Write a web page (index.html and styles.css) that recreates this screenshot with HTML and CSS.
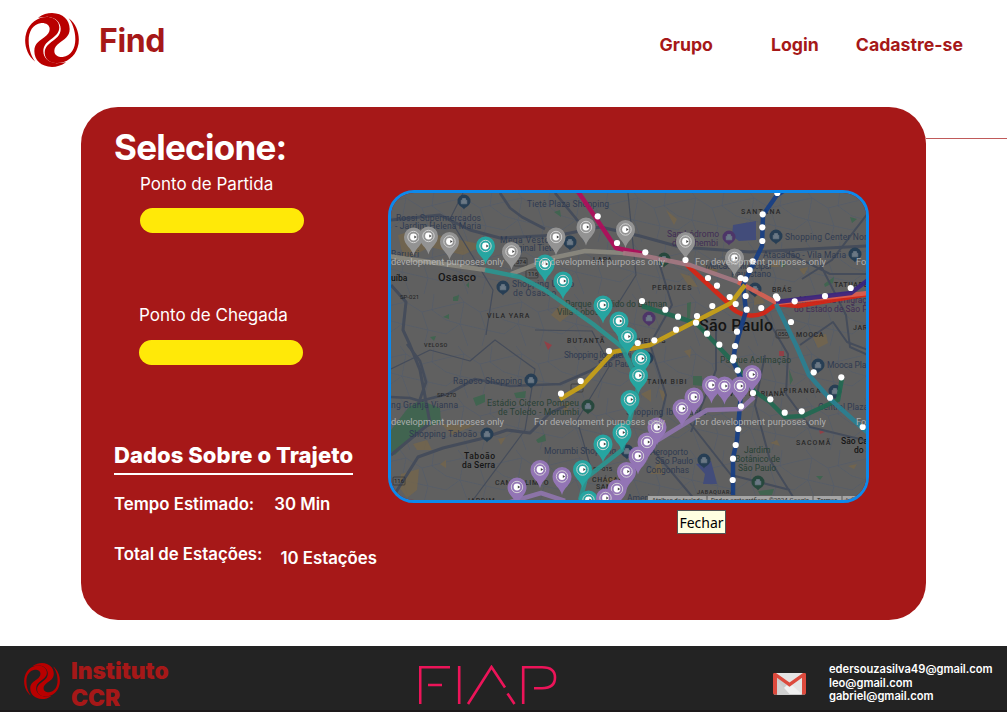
FILE: index.html
```html
<!DOCTYPE html>
<html lang="pt-BR">
<head>
<meta charset="utf-8">
<title>Find</title>
<link rel="stylesheet" href="styles.css">
</head>
<body>
<svg class="defs" width="0" height="0" aria-hidden="true">
  <defs>
    <path id="swirl" d="M108 185C80 165 72 125 81 98C90 66 120 48 148 51C168 53 180 66 180 82C180 100 166 110 155 118C138 130 132 140 132 154C132 174 148 188 172 190L200 187C186 197 172 201 158 201C125 200 105 180 105 153C105 130 122 122 135 112C146 103 151 97 151 87C151 74 138 68 126 69C100 72 88 95 88 122C88 150 98 172 108 185Z"/>
    <g id="logo"><use href="#swirl"/><use href="#swirl" transform="rotate(180 158 120)"/></g>
    <g id="pin">
      <path d="M0 18.500C-1.500 11-9.500 8.500-9.500 0A9.500 9.500 0 0 1 9.500 0C9.500 8.500 1.500 11 0 18.500Z"/>
      <circle r="5.700" fill="none" stroke="#d8d8d8" stroke-width=".9"/>
      <circle r="3.400" fill="#fff"/>
      <path d="M.8-1.500L3.200 0L.8 1.500Z" fill="#444"/>
    </g>
    <circle id="s" r="3.100"/>
    <g id="poi"><path d="M0 8.500C-1 6-6.500 5-6.500 0A6.500 6.500 0 0 1 6.500 0C6.500 5 1 6 0 8.500Z"/><path d="M-2.800-.8H2.800V2.800H-2.800ZM-1.500-.8V-2.500H1.500V-.8" fill="#6b7885" stroke="#6b7885" stroke-width=".7"/></g>
    <pattern id="streets" x="388" y="190" width="58" height="52" patternUnits="userSpaceOnUse">
      <path d="M0 12L18 8L34 18L58 12M12 0L18 8L14 30L22 52M34 18L40 36L58 40M0 40L14 30L40 36L36 52M46 0L44 16L58 26M0 26L14 30" fill="none" stroke="#535c68" stroke-width=".7"/>
    </pattern>
  </defs>
</svg>

<header class="header">
  <a class="brand"><svg class="brand-logo" viewBox="77 39 162 162"><use href="#logo"/></svg><span>Find</span></a>
  <nav class="nav"><a class="nav-group">Grupo</a><a class="nav-login">Login</a><a>Cadastre-se</a></nav>
</header>

<main class="main">
  <section class="card">
    <div class="panel">
      <h1 class="title">Selecione:</h1>
      <div class="field"><label>Ponto de Partida</label><div class="input"></div></div>
      <div class="field field-end"><label>Ponto de Chegada</label><div class="input"></div></div>
      <h2 class="subtitle">Dados Sobre o Trajeto</h2>
      <div class="data"><span class="data-name">Tempo Estimado:</span><span>30 Min</span></div>
      <div class="data data-total"><span class="data-name">Total de Estações:</span><span class="total-value">10 Estações</span></div>
    </div>
    <div class="map-column">
      <div class="map">
        <svg viewBox="391 193 475 307" preserveAspectRatio="none">
          <rect x="388" y="190" width="482" height="314" fill="#606060"/>
          <rect x="388" y="190" width="482" height="314" fill="url(#streets)"/>
          <g fill="#416450">
            <path d="M391 430L408 408L420 400L440 408L441 422L420 430L395 455L391 452Z"/>
            <path d="M473 398L485 394V402L476 406ZM514 393L526 391L525 398H516ZM536 440L545 434L546 441L538 443ZM453 297L459 295L458 301H453ZM466 285L469 282V288ZM443 317L449 314V319ZM430 337L436 336L434 341ZM693 376H702V386L693 385ZM824 284L834 277L833 283L825 287ZM789 369L793 380L790 385ZM687 303L691 302L690 318H687ZM554 212L560 210L561 217ZM758 491L774 489L772 495H760ZM850 217L857 219L852 223ZM780 262L786 264L783 268ZM816 476L823 476L820 480Z"/>
          </g>
          <g fill="#766649" opacity=".75">
            <path d="M398 235L415 230L460 240L485 245L463 255L430 247L404 260ZM413 444L427 440L432 450H417ZM401 474L419 469L417 490L407 498L399 487ZM441 424L475 425L452 435ZM551 315L565 300L574 311L560 322ZM666 210L677 219L674 225ZM680 273L690 276L698 287L689 286ZM700 262L718 270L714 276ZM755 287L765 303L754 305ZM812 336L826 334L828 343L818 348ZM641 394L651 389V402ZM659 389L667 393L663 402ZM770 267L777 260L779 267ZM602 479L617 477L612 486ZM848 466L857 464L854 469ZM560 405L571 402L566 413ZM650 474L660 460L664 474ZM799 269L808 267L804 275ZM684 351L691 349L690 358ZM498 439L506 437L501 445ZM440 464L446 460V468ZM770 443L777 440L780 446Z"/>
          </g>
          <path d="M733 225L756 221V240L739 241L732 236ZM696 464L711 461L717 484H703L705 474Z" fill="#424c7a"/>
          <path d="M544 341L552 345L548 350ZM779 351H784V356H779ZM819 430L825 432L820 434Z" fill="#914047"/>
          <g fill="none" stroke="#454c5a" stroke-linejoin="round">
            <path d="M391 220L440 215L470 230L500 238L560 235L600 227L640 236L680 247L750 252L868 246" stroke-width="3"/>
            <path d="M391 455L430 423L420 370L410 345L403 330L406 302L391 285" stroke-width="3"/>
            <path d="M391 500L418 457L443 448L480 439L507 430L530 433L550 413L565 406" stroke-width="3"/>
            <path d="M407 344L420 361L426 382L418 405M391 397L410 398L420 401L448 394L475 379L510 386L560 384L590 371L630 349M500 193L510 208L522 217L545 229M555 193L578 221" stroke-width="2.700"/>
            <path d="M868 213L832 260L802 279M782 250L830 274L868 274M800 345L833 322L847 342L868 350M818 260L846 315L850 347L868 355M762 310L788 354L786 394L810 427L868 441M765 355L755 405L770 460L795 500M657 256L672 305L650 344L666 395L653 450L695 500M690 423L731 475L790 490M716 325L716 370L691 432" stroke-width="2"/>
            <path d="M391 369L430 350L470 361L495 340L535 369L525 430L473 500M535 330L592 331L610 365L577 420L592 472M463 193L450 219L493 290L486 335M628 193L636 275L616 307" stroke-width="1.200"/>
          </g>
          <g fill="#273e54"><use href="#poi" x="464" y="201"/><use href="#poi" x="503" y="287"/><use href="#poi" x="531" y="380"/><use href="#poi" x="487" y="434"/><use href="#poi" x="570" y="242"/><use href="#poi" x="776" y="236"/><use href="#poi" x="855" y="254"/><use href="#poi" x="818" y="365"/><use href="#poi" x="835" y="391"/><use href="#poi" x="704" y="460"/><use href="#poi" x="627" y="451"/><use href="#poi" x="647" y="358"/><use href="#poi" x="755" y="289"/></g>
          <g fill="#27483d"><use href="#poi" x="588" y="406"/><use href="#poi" x="664" y="259"/><use href="#poi" x="758" y="482"/></g>
          <g fill="#4d3568"><use href="#poi" x="729" y="237"/><use href="#poi" x="649" y="318"/></g>
          <g class="places">
            <text x="396" y="221" textLength="85">Rossi Supermercados</text><text x="395" y="229" textLength="86">- Jardim Helena Maria</text>
            <text x="391" y="257" textLength="28">Barueri</text><text x="527" y="207" textLength="82">Tietê Plaza Shopping</text>
            <text x="500" y="243" textLength="64">Mega Vestcasa</text><text x="507" y="251" textLength="49">Original Tietê</text>
            <text x="512" y="287" textLength="62">Shopping União</text><text x="513" y="296" textLength="43">de Osasco</text>
            <text x="453" y="384" textLength="69">Raposo Shopping</text><text x="391" y="408" textLength="67">ng Granja Vianna</text>
            <text x="409" y="437" textLength="68">Shopping Taboão</text><text x="544" y="454" textLength="72">Morumbi Shopping</text>
            <text x="564" y="358" textLength="67">Shopping Iguatemi</text><text x="598" y="367">São Paulo</text><text x="626" y="415" textLength="80">Shopping Ibirapuera</text>
            <text x="785" y="240" textLength="82">Shopping Center Nor</text><text x="763" y="258" textLength="83">Atacadão - Vila Maria</text>
            <text x="705" y="269" textLength="66">Mercado Municipal</text><text x="731" y="277" textLength="40">Paulistano</text>
            <text x="827" y="368" textLength="48">Mooca Plaza</text><text x="818" y="410" textLength="50">Central Plaza</text>
            <text x="650" y="455" textLength="38">Aeroporto</text><text x="655" y="464">São Paulo</text><text x="646" y="473">Congonhas</text><text x="627" y="501">Americano</text>
          </g>
          <g class="places purple"><text x="667" y="237" textLength="52">Sambódromo</text><text x="672" y="246" textLength="46">do Anhembi</text><text x="799" y="303">Museu da Imigração</text><text x="794" y="312">do Estado de São Paulo</text></g>
          <g class="places green"><text x="565" y="307" textLength="102">Parque Cândido do Batman</text><text x="557" y="315">Villa-Lobos</text><text x="487" y="406" textLength="92">Estádio Cicero Pompeu</text><text x="498" y="415" textLength="81">de Toledo - Morumbi</text><text x="720" y="363" textLength="71">Parque Aclimação</text><text x="744" y="453">Jardim</text><text x="735" y="462">Botânico de</text><text x="738" y="471">São Paulo</text></g>
          <g class="areas">
            <text x="487" y="318" textLength="43">VILA YARA</text><text x="567" y="343" textLength="38">BUTANTÃ</text><text x="593" y="262">LAPA</text><text x="625" y="343">PINHEIROS</text><text x="652" y="290" textLength="40">PERDIZES</text><text x="741" y="214" textLength="40">SANTANA</text><text x="772" y="292">BRÁS</text><text x="834" y="287">TATUAPÉ</text><text x="796" y="337">MOOCA</text><text x="853" y="330">JARDIM</text><text x="647" y="384" textLength="40">TAIM BIBI</text><text x="729" y="396">VILA MARIANA</text><text x="780" y="393" textLength="41">IPIRANGA</text><text x="796" y="445" textLength="35">SACOMÃ</text><text x="495" y="485">CAMPO LIMPO</text><text x="592" y="482">CHÁCARA</text><text x="596" y="489">SANTO</text><text x="697" y="494" class="tiny">JABAQUARA</text><text x="466" y="503">JARDIM</text><text x="424" y="347" class="tiny">VELOSO</text>
          </g>
          <g class="roads"><text x="400" y="299">SP-021</text><text x="437" y="397">SP-270</text><text x="593" y="471">SP-015</text><text x="394" y="483">116</text><text x="516" y="264">374</text><text x="528" y="276">116</text><text x="778" y="336">050</text></g>
          <g fill="none" stroke="#333" stroke-width=".7"><rect x="393" y="477" width="12" height="8" rx="1"/><rect x="514" y="258" width="13" height="8" rx="1"/><rect x="526" y="270" width="12" height="8" rx="1"/><rect x="776" y="330" width="13" height="8" rx="1"/><rect x="571" y="384" width="12" height="8" rx="1"/></g>
          <g class="towns"><text x="438" y="281" textLength="38">Osasco</text><text x="391" y="281" class="small">uíba</text><text x="464" y="459" class="small" textLength="31">Taboão</text><text x="462" y="468" class="small" textLength="33">da Serra</text><text x="699" y="331" class="city" textLength="74">São Paulo</text><text x="841" y="444" class="small">São Caetano</text><text x="854" y="453" class="small">do Sul</text></g>
          <g class="lines">
            <path d="M388 256L415 260L486 270M511 274L552 258L585 251L625 253" stroke="#8c8a80"/>
            <path d="M686 264L728 303C738 319 759 317 767 311L776 304L798 306L868 294" stroke="#dc2413"/>
            <path d="M577 190L616 248L645 254" stroke="#b30b5b"/>
            <path d="M623 253L645 256L690 265L741 283" stroke="#a67983"/>
            <path d="M738 282L777 303L868 293" stroke="#d96052"/>
            <path d="M776 302L851 293L868 280" stroke="#38247f"/>
            <path d="M642 306L696 323L735 364L754 391L770 402L785 417L803 416L838 400L842 378" stroke="#206951"/>
            <path d="M776 304L796 345L809 375L830 399L868 433" stroke="#298194"/>
            <path d="M785 190L777 195L763 215L762 246L743 285L746 311L735 348L733 361L742 381L737 440L733 458L733 495" stroke="#153e86"/>
            <path d="M560 399L582 386L613 352L650 345L696 321L731 303L745 285" stroke="#cba315"/>
            <path d="M485 270L520 277L545 290L593 324L622 347L633 370L640 380L622 450L586 478L580 500" stroke="#2a9691"/>
            <path d="M609 505L625 480L645 448L707 410L741 409L754 397M500 505L541 493L565 501" stroke="#9075ae"/>
          </g>
          <g fill="#939393"><use href="#pin" x="413.500" y="237"/><use href="#pin" x="428.500" y="236"/><use href="#pin" x="449.500" y="241.500"/><use href="#pin" x="511.500" y="251.500"/><use href="#pin" x="556" y="237"/><use href="#pin" x="586" y="227"/><use href="#pin" x="625.500" y="229.500"/><use href="#pin" x="685.500" y="241.500"/><use href="#pin" x="734.500" y="258"/></g>
          <g fill="#26a5a1"><use href="#pin" x="485.500" y="246"/><use href="#pin" x="545" y="264"/><use href="#pin" x="563" y="281"/><use href="#pin" x="603" y="305"/><use href="#pin" x="619" y="321"/><use href="#pin" x="627.500" y="336.500"/><use href="#pin" x="641" y="358.500"/><use href="#pin" x="638.500" y="375.500"/><use href="#pin" x="630" y="399.500"/><use href="#pin" x="622" y="432.500"/><use href="#pin" x="603" y="444"/><use href="#pin" x="582.500" y="469.500"/><use href="#pin" x="588.500" y="500"/></g>
          <g fill="#9375b5"><use href="#pin" x="711.500" y="385"/><use href="#pin" x="724.500" y="386"/><use href="#pin" x="740" y="386"/><use href="#pin" x="752" y="374.500"/><use href="#pin" x="694" y="397"/><use href="#pin" x="682" y="408.500"/><use href="#pin" x="657" y="427"/><use href="#pin" x="647" y="442"/><use href="#pin" x="638" y="456"/><use href="#pin" x="626.500" y="471.500"/><use href="#pin" x="617" y="489"/><use href="#pin" x="605.500" y="498"/><use href="#pin" x="562" y="476.500"/><use href="#pin" x="540" y="469.500"/><use href="#pin" x="517" y="487"/></g>
          <g fill="#fff">
            <use href="#s" x="597.700" y="216.300"/><use href="#s" x="617" y="243"/><use href="#s" x="645.300" y="252.300"/><use href="#s" x="685.500" y="260"/><use href="#s" x="708" y="278"/><use href="#s" x="717" y="285.700"/><use href="#s" x="642" y="301"/><use href="#s" x="665.300" y="309.700"/><use href="#s" x="678" y="316.700"/><use href="#s" x="676" y="329.700"/><use href="#s" x="696" y="322.700"/><use href="#s" x="697" y="316"/><use href="#s" x="712.300" y="306"/><use href="#s" x="707" y="333.700"/><use href="#s" x="654.300" y="340.300"/><use href="#s" x="637.700" y="343"/><use href="#s" x="609" y="351"/>
            <use href="#s" x="777.300" y="193"/><use href="#s" x="762.700" y="214.300"/><use href="#s" x="762.300" y="227.300"/><use href="#s" x="762.300" y="241"/><use href="#s" x="752.700" y="261.300"/><use href="#s" x="749.700" y="270"/><use href="#s" x="740.700" y="278"/><use href="#s" x="745.300" y="279.300"/><use href="#s" x="729.700" y="297"/><use href="#s" x="735.700" y="304"/><use href="#s" x="745.700" y="296"/><use href="#s" x="746.700" y="309.700"/><use href="#s" x="761.300" y="308"/><use href="#s" x="776" y="296.300"/><use href="#s" x="777.300" y="298.300"/><use href="#s" x="794.700" y="301.300"/><use href="#s" x="825" y="296"/><use href="#s" x="850.700" y="288"/><use href="#s" x="791" y="322"/><use href="#s" x="737" y="331.700"/><use href="#s" x="735" y="346"/><use href="#s" x="719.300" y="344.700"/>
            <use href="#s" x="733.700" y="357.300"/><use href="#s" x="733" y="360.300"/><use href="#s" x="737.700" y="370.300"/><use href="#s" x="753" y="393"/><use href="#s" x="741" y="406.300"/><use href="#s" x="770.300" y="399.300"/><use href="#s" x="784.700" y="412.700"/><use href="#s" x="801.700" y="411.300"/><use href="#s" x="830" y="397.700"/><use href="#s" x="841.300" y="377.300"/><use href="#s" x="813.700" y="372.300"/><use href="#s" x="862.700" y="427"/><use href="#s" x="738.300" y="429"/><use href="#s" x="735.700" y="445"/><use href="#s" x="733" y="458.700"/><use href="#s" x="732.700" y="480"/><use href="#s" x="580.700" y="381"/><use href="#s" x="561" y="393.700"/>
          </g>
          <g class="watermark"><text x="391" y="265" textLength="113">development purposes only</text><text x="534" y="265" textLength="131">For development purposes only</text><text x="695" y="265" textLength="131">For development purposes only</text><text x="856" y="265">For</text><text x="391" y="425" textLength="113">development purposes only</text><text x="534" y="425" textLength="131">For development purposes only</text><text x="695" y="425" textLength="131">For development purposes only</text><text x="856" y="425">For</text></g>
          <path d="M648 496H868V504H648Z" fill="#a5a5a5"/>
          <g class="credits"><text x="652" y="501.500" textLength="51">Atalhos do teclado</text><text x="711" y="501.500" textLength="98">Dados cartográficos ©2024 Google</text><text x="817" y="501.500">Termos</text><text x="846" y="501.500">Informar</text></g>
          <path d="M707 496V502M813 496V502M842 496V502" stroke="#444" stroke-width=".8"/>
        </svg>
      </div>
      <div class="tooltip">Fechar</div>
    </div>
  </section>
  <div class="rule"></div>
</main>

<footer class="footer">
  <div class="institute"><svg class="foot-logo" viewBox="77 39 162 162"><use href="#logo"/></svg><span>Instituto<br>CCR</span></div>
  <svg class="fiap" viewBox="0 0 138 40" fill="none" stroke="#ec1459" stroke-width="2.600"><path d="M1.200 39V2.300H31M9 20H23M40.200 1V39M49 39L72.500 2L86 22.500M88.500 28.500L95.500 39M104.200 39V2.300H123C132 2.300 136 6.500 136 12.500C136 19.500 132 23.200 123 23.200H115"/></svg>
  <div class="contact">
    <svg class="gmail" viewBox="0 0 33 22"><path d="M1 0H32V21.500H1Z" fill="#e4e4e4"/><path d="M4 4L16.500 14L29 21.500H4Z" fill="#cacaca"/><path d="M4 21.500L14 12L16.500 14L19 12L29 21.500Z" fill="#f0f0f0"/><path d="M4 7L17 21.500H4Z" fill="#d0d0d0"/><path d="M0 1Q0 0 1.500 0H3L16.500 9.500L30 0H31.500Q33 0 33 1V20Q33 21.500 31.500 21.500H29V4.800L16.500 13.700L4 4.800V21.500H1.500Q0 21.500 0 20Z" fill="#dc4a3d"/></svg>
    <address>edersouzasilva49@gmail.com<br>leo@gmail.com<br>gabriel@gmail.com</address>
  </div>
</footer>
</body>
</html>
```
FILE: styles.css
```css
* { box-sizing: border-box; }
body { margin: 0; width: 1007px; height: 712px; overflow: hidden; background: #fff; font-family: Inter, "Liberation Sans", sans-serif; color: #a61818; }
.defs { display: block; }
#logo { fill: #b90000; }
.header { height: 107px; display: flex; justify-content: space-between; padding: 13px 44px 0 25px; }
.brand { display: flex; align-items: flex-start; gap: 20px; font-size: 32px; line-height: 56px; font-weight: 700; letter-spacing: -.4px; }
.brand-logo { width: 54px; height: 54px; }
.nav { display: flex; font-size: 17.700px; line-height: 24px; font-weight: 700; padding-top: 20px; }
.nav-group { margin-right: 58px; }
.nav-login { margin-right: 37px; }
.main { height: 539px; display: flex; align-items: flex-start; padding-left: 81px; }
.card { width: 845px; height: 513px; flex: none; display: flex; background: #a61818; border-radius: 37px; color: #fff; }
.panel { width: 307px; flex: none; padding: 19px 0 0 33px; white-space: nowrap; }
.title { margin: 0; font-size: 35px; line-height: 42px; font-weight: 700; letter-spacing: -.75px; }
.field { padding-left: 26px; height: 131px; padding-top: 7px; }
.field-end { padding-left: 25px; }
.field label { display: block; font-size: 17px; line-height: 18px; }
.input { width: 164px; height: 25px; margin-top: 15px; border-radius: 13px; background: #ffe908; }
.field-end .input { margin-top: 16px; }
.subtitle { display: table; margin: 7px 0 0; height: 38px; font-size: 22px; line-height: 36px; font-weight: 800; letter-spacing: .06px; border-bottom: 2px solid #fff; }
.data { display: flex; margin-top: 19px; font-size: 16.800px; line-height: 20px; font-weight: 600; gap: 20px; }
.data-total { margin-top: 30px; gap: 18px; }
.total-value { padding-top: 4px; }
.map-column { padding-top: 83px; }
.map { width: 481px; height: 313px; border: 3px solid #0d89eb; border-radius: 26px; overflow: hidden; }
.map svg { display: block; width: 100%; height: 100%; }
.tooltip { width: 49px; height: 24px; margin: 7px 0 0 289px; border: 1px solid #555; background: #ffffe1; color: #000; font: 14px/23px "Noto Sans", sans-serif; text-align: center; }
.rule { flex: 1; height: 1px; margin-top: 31px; background: #c05a5a; }
.footer { height: 66px; display: flex; align-items: flex-start; background: #232323; border-bottom: 2px solid #1d191a; }
.institute { width: 419px; padding: 11px 0 0 24px; display: flex; gap: 11px; font-size: 22.800px; line-height: 27px; font-weight: 900; }
.foot-logo { width: 36px; height: 36px; margin-top: 6px; }
.fiap { width: 138px; height: 40px; margin-top: 19px; }
.contact { display: flex; padding: 17px 0 0 216px; gap: 23px; }
.gmail { width: 33px; height: 22px; margin-top: 10px; }
address { color: #fff; font-style: normal; font-weight: 600; font-size: 11.150px; line-height: 13.500px; }
.lines path { fill: none; stroke-width: 4.500; stroke-linejoin: round; opacity: .9; }
.map text { font-family: Roboto, sans-serif; }
.places { font-size: 8.500px; fill: #303b51; }
.places.purple { fill: #412d55; }
.places.green { fill: #294035; }
.areas { font-size: 7px; font-weight: 500; letter-spacing: .6px; fill: #292929; }
.areas .tiny { font-size: 5.500px; }
.roads { font-size: 6px; fill: #222; }
.towns { font-size: 11px; font-weight: 500; fill: #151515; }
.towns .small { font-size: 8.500px; }
.towns .city { font-size: 16px; }
.watermark { font-size: 9.300px; fill: #bcbcbc; opacity: .85; }
.credits { font-size: 6px; fill: #222; }
```
